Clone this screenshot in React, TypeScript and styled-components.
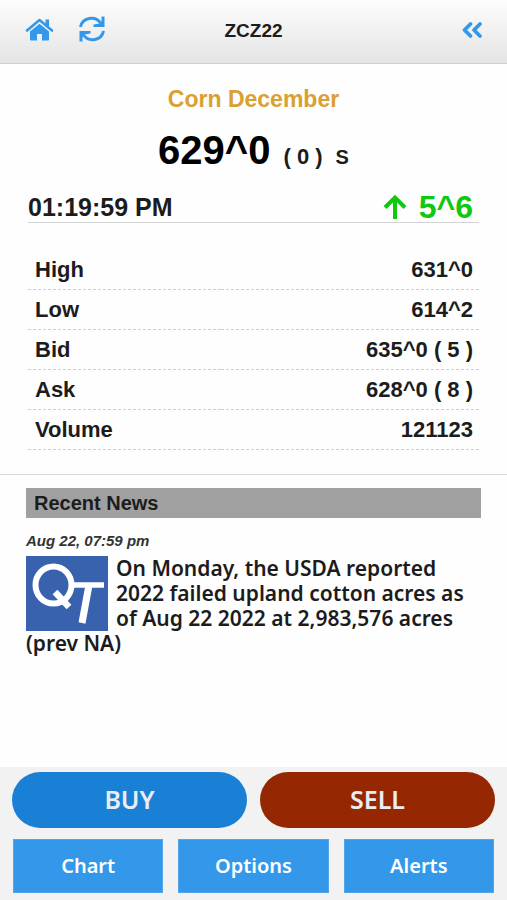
import React from "react";
import styled, { createGlobalStyle } from "styled-components";

const arial = '"Liberation Sans", Arial, sans-serif';
const noto = '"Noto Sans", "Open Sans", sans-serif';

const GlobalStyle = createGlobalStyle`
  *, *::before, *::after { box-sizing: border-box; }
  body { margin: 0; background: #fefefe; color: #1c1c1c; font-family: ${arial}; }
`;

const Screen = styled.div`
  display: flex;
  flex-direction: column;
  min-height: 100vh;
`;

const Header = styled.header`
  display: grid;
  grid-template-columns: 1fr auto 1fr;
  align-items: center;
  height: 64px;
  padding: 0 24px 4px;
  background: linear-gradient(#fdfdfd, #e4e4e4);
  border-bottom: 1px solid #d0d0d0;
`;

const Tools = styled.div<{ $end?: boolean }>`
  display: flex;
  gap: 24px;
  justify-content: ${(p) => (p.$end ? "flex-end" : "flex-start")};
`;

const IconButton = styled.button`
  display: flex;
  padding: 0;
  border: 0;
  background: none;
  color: #3498ea;
  cursor: pointer;
`;

const Title = styled.h1`
  margin: 0;
  padding-top: 2px;
  font-size: 19px;
  line-height: 24px;
`;

const Quote = styled.section`
  padding: 20px 28px 24px;
  border-bottom: 1px solid #d8d8d8;
`;

const Contract = styled.h2`
  margin: 0;
  font-size: 23px;
  line-height: 30px;
  text-align: center;
  color: #d9a032;
`;

const PriceLine = styled.div`
  display: flex;
  justify-content: center;
  align-items: baseline;
  gap: 13px;
  padding-top: 12px;
  font-size: 22px;
  font-weight: bold;
  line-height: 48px;
`;

const Price = styled.strong`
  font-size: 40px;
  color: #000;
`;

const Session = styled.span`
  font-size: 20px;
`;

const TimeLine = styled.div`
  display: flex;
  justify-content: space-between;
  align-items: center;
  height: 42px;
  padding: 10px 6px 0 0;
  border-bottom: 1px solid #d4d4d4;
  font-size: 25px;
  font-weight: bold;
  line-height: 30px;
`;

const Change = styled.span`
  display: flex;
  align-items: center;
  gap: 12px;
  font-size: 32px;
  color: #0fc80f;
`;

const Stats = styled.table`
  width: 100%;
  margin-top: 27px;
  border-collapse: collapse;
  font-size: 22px;
  line-height: 39px;
`;

const StatRow = styled.tr`
  border-bottom: 1px dashed #cfcfcf;
`;

const StatName = styled.th`
  padding: 0 0 0 7px;
  text-align: left;
`;

const StatValue = styled.td`
  padding: 0 6px 0 0;
  font-weight: bold;
  text-align: right;
`;

const News = styled.section`
  flex: 1;
  padding: 13px 26px 20px;
`;

const NewsTitle = styled.h2`
  margin: 0;
  padding: 0 8px;
  background: #a0a0a0;
  font-size: 20px;
  line-height: 30px;
`;

const NewsDate = styled.time`
  display: block;
  padding-top: 12px;
  font-size: 15px;
  font-style: italic;
  font-weight: bold;
  line-height: 22px;
  color: #333;
`;

const NewsBody = styled.p`
  margin: 4px 0 0;
  padding-right: 8px;
  font-family: ${noto};
  font-size: 21px;
  font-weight: 600;
  line-height: 25px;
`;

const Logo = styled.svg`
  float: left;
  width: 82px;
  height: 75px;
  margin-right: 8px;
`;

const Footer = styled.footer`
  display: grid;
  gap: 11px;
  padding: 5px 12px 7px;
  background: #f2f2f2;
`;

const TradeRow = styled.div`
  display: flex;
  gap: 13px;
`;

const NavRow = styled.nav`
  display: flex;
  gap: 15px;
  padding: 0 1px;
`;

const TradeButton = styled.button<{ $color: string }>`
  flex: 1;
  height: 56px;
  padding: 0 0 2px;
  border: 0;
  border-radius: 28px;
  background: ${(p) => p.$color};
  color: #ececf4;
  font: 600 25px ${noto};
  cursor: pointer;
`;

const NavButton = styled.button`
  flex: 1;
  height: 54px;
  padding: 0 0 2px;
  border: 1px solid #52a5e8;
  background: #3498ea;
  color: #fff;
  font: 600 20px ${noto};
  cursor: pointer;
`;

const stats = [
  ["High", "631^0"],
  ["Low", "614^2"],
  ["Bid", "635^0 ( 5 )"],
  ["Ask", "628^0 ( 8 )"],
  ["Volume", "121123"],
];

const HomeIcon = () => (
  <svg width="30" height="30" viewBox="0 0 30 30" fill="currentColor">
    <path d="M3 15.500 15.500 5 28 15.500" fill="none" stroke="currentColor" strokeWidth="2.600" strokeLinecap="round" strokeLinejoin="round" />
    <path d="M21.500 4.500H25v8.500l-3.500-3z" />
    <path d="M6 16.500 15.500 8.800l9.500 7.700v8q0 1-1 1h-6v-6.500h-5v6.500H7q-1 0-1-1z" />
  </svg>
);

const RefreshIcon = () => (
  <svg width="28" height="28" viewBox="0 0 28 28" fill="none" stroke="currentColor" strokeWidth="3">
    <path d="M2.500 12A11 10.500 0 0 1 22.500 8M25.500 16A11 10.500 0 0 1 5.500 20" />
    <path d="M26.500 1.500v10.500H15.500v-2.500l6-1 2-2.500v-4.500zM1.500 26.500V16h11v2.500l-6 1-2 2.500v4.500z" fill="currentColor" stroke="none" />
  </svg>
);

const BackIcon = () => (
  <svg width="22" height="22" viewBox="0 0 22 22" fill="none" stroke="currentColor" strokeWidth="3.800" strokeLinecap="round" strokeLinejoin="round">
    <path d="M9.500 5 3.500 11l6 6M19 5l-6 6 6 6" />
  </svg>
);

const UpIcon = () => (
  <svg width="24" height="26" viewBox="0 0 24 26" fill="none" stroke="currentColor" strokeWidth="4">
    <path d="M12 25V4M2 13.500 12 3.500l10 10" />
  </svg>
);

export default function App() {
  return (
    <Screen>
      <GlobalStyle />
      <Header>
        <Tools>
          <IconButton aria-label="Home"><HomeIcon /></IconButton>
          <IconButton aria-label="Refresh"><RefreshIcon /></IconButton>
        </Tools>
        <Title>ZCZ22</Title>
        <Tools $end>
          <IconButton aria-label="Back"><BackIcon /></IconButton>
        </Tools>
      </Header>
      <Quote>
        <Contract>Corn December</Contract>
        <PriceLine>
          <Price>629^0</Price>
          <span>( 0 )</span>
          <Session>S</Session>
        </PriceLine>
        <TimeLine>
          <time>01:19:59 PM</time>
          <Change><UpIcon />5^6</Change>
        </TimeLine>
        <Stats>
          <tbody>
            {stats.map(([name, value]) => (
              <StatRow key={name}>
                <StatName scope="row">{name}</StatName>
                <StatValue>{value}</StatValue>
              </StatRow>
            ))}
          </tbody>
        </Stats>
      </Quote>
      <News>
        <NewsTitle>Recent News</NewsTitle>
        <NewsDate>Aug 22, 07:59 pm</NewsDate>
        <NewsBody>
          <Logo viewBox="0 0 82 75" role="img" aria-label="QT">
            <rect width="82" height="75" fill="#3862ae" />
            <g fill="none" stroke="#fff">
              <ellipse cx="27.500" cy="29" rx="18" ry="18.500" strokeWidth="6" />
              <path d="M29 36 43 51" strokeWidth="6.500" />
              <path d="M46 29h32" strokeWidth="5.500" />
              <path d="M63 29 56 67" strokeWidth="7" />
            </g>
          </Logo>
          On Monday, the USDA reported 2022 failed upland cotton acres as of Aug 22 2022 at 2,983,576 acres (prev NA)
        </NewsBody>
      </News>
      <Footer>
        <TradeRow>
          <TradeButton $color="#1a80d5">BUY</TradeButton>
          <TradeButton $color="#952802">SELL</TradeButton>
        </TradeRow>
        <NavRow>
          <NavButton>Chart</NavButton>
          <NavButton>Options</NavButton>
          <NavButton>Alerts</NavButton>
        </NavRow>
      </Footer>
    </Screen>
  );
}
